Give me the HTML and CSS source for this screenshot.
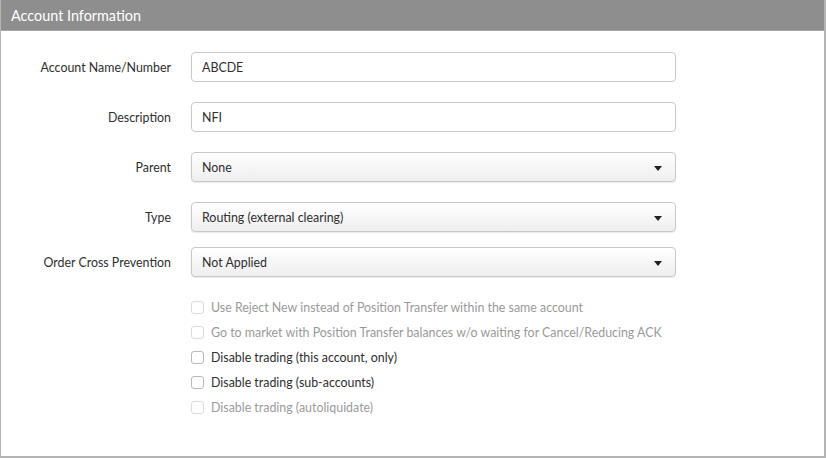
FILE: index.html
```html
<!DOCTYPE html>
<html lang="en">
<head>
    <meta charset="UTF-8">
    <title>Account Information</title>
    <link rel="stylesheet" href="styles.css">
</head>
<body>
    <div class="panel">
        <div class="panel-header">Account Information</div>

        <div class="panel-body">
            <!-- Text fields -->
            <div class="row">
                <label class="label">Account Name/Number</label>
                <div class="field input">ABCDE</div>
            </div>
            <div class="row">
                <label class="label">Description</label>
                <div class="field input">NFI</div>
            </div>

            <!-- Dropdowns -->
            <div class="row">
                <label class="label">Parent</label>
                <div class="field select">None<span class="caret"></span></div>
            </div>
            <div class="row">
                <label class="label">Type</label>
                <div class="field select">Routing (external clearing)<span class="caret"></span></div>
            </div>
            <div class="row row-tight">
                <label class="label">Order Cross Prevention</label>
                <div class="field select">Not Applied<span class="caret"></span></div>
            </div>

            <!-- Options -->
            <ul class="checks">
                <li class="check disabled"><span class="box"></span>Use Reject New instead of Position Transfer within the same account</li>
                <li class="check disabled"><span class="box"></span>Go to market with Position Transfer balances w/o waiting for Cancel/Reducing ACK</li>
                <li class="check"><span class="box"></span>Disable trading (this account, only)</li>
                <li class="check"><span class="box"></span>Disable trading (sub-accounts)</li>
                <li class="check disabled"><span class="box"></span>Disable trading (autoliquidate)</li>
            </ul>
        </div>
    </div>
</body>
</html>
```
FILE: styles.css
```css
* {
    box-sizing: border-box;
    margin: 0;
    padding: 0;
}
body {
    font-family: Lato, "Open Sans", sans-serif;
    font-size: 12.4px;
    color: #2e2e2e;
    background: #fff;
}

/* Panel */
.panel {
    width: 826px;
    height: 458px;
    border: 1px solid #b4b4b4;
    border-bottom-width: 2px;
    border-right-width: 2px;
    border-top: none;
}
.panel-header {
    height: 31px;
    line-height: 31px;
    padding-left: 10px;
    background-color: #8e8e8e;
    color: #fff;
    font-size: 14.4px;
    border-bottom: 1px solid #a5a5a5;
}
.panel-body {
    padding-top: 21px;
}

/* Form rows */
.row {
    display: flex;
    align-items: center;
    margin-bottom: 20px;
}
.row-tight {
    margin-top: -5px;
    margin-bottom: 0;
}
.label {
    width: 170px;
    text-align: right;
    margin-right: 20px;
}
.field {
    width: 485px;
    height: 30px;
    border: 1px solid #c8c8c8;
    border-radius: 4px;
    padding: 0 10px;
    display: flex;
    align-items: center;
    position: relative;
}
.input {
    background-color: #fff;
}
.select {
    background: linear-gradient(#ffffff, #eeeeee);
    box-shadow: 0 1px 1px rgba(0, 0, 0, 0.08);
}
.caret {
    position: absolute;
    right: 13px;
    top: 13px;
    width: 0;
    height: 0;
    border-left: 4px solid transparent;
    border-right: 4px solid transparent;
    border-top: 5px solid #222;
}

/* Checkboxes */
.checks {
    list-style: none;
    margin-top: 18px;
    margin-left: 190px;
}
.check {
    display: flex;
    align-items: center;
    height: 25px;
}
.box {
    width: 13px;
    height: 13px;
    border: 1px solid #b8b8b8;
    border-radius: 3px;
    background: #fff;
    margin-right: 7px;
}
.check.disabled {
    color: #9a9a9a;
}
.check.disabled .box {
    border-color: #dcdcdc;
}
```
